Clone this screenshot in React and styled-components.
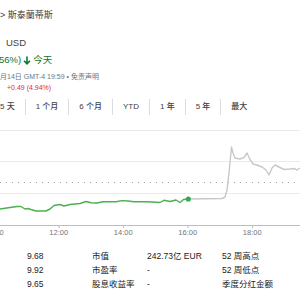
import React from "react"
import styled, { createGlobalStyle } from "styled-components"

const Global = createGlobalStyle`
    html, body {
        margin: 0;
        padding: 0;
        background: #fff;
    }
    body {
        width: 300px;
        height: 300px;
        overflow: hidden;
        font-family: "Liberation Sans", "Noto Sans CJK SC", sans-serif;
        color: #202124;
    }
`

export const Page = styled.div`
    width: 300px;
    height: 300px;
    overflow: hidden;
    position: relative;
`

export const Crumb = styled.div`
    height: 30px;
    line-height: 30px;
    font-size: 9px;
    color: #3c4043;
    white-space: nowrap;
`

export const PriceRow = styled.div`
    margin-top: 4px;
    height: 18px;
    line-height: 18px;
    padding-left: 6px;
    font-size: 9.5px;
    color: #3c4043;
`

export const ChangeRow = styled.div`
    height: 16px;
    line-height: 16px;
    font-size: 9.5px;
    color: #137333;
    display: flex;
    align-items: center;
    gap: 2px;
    white-space: nowrap;
    margin-left: -1px;
`

export const Meta = styled.div`
    margin-top: 3px;
    height: 12px;
    line-height: 12px;
    font-size: 7px;
    color: #70757a;
    white-space: nowrap;
`

export const AfterHours = styled.div`
    height: 10px;
    line-height: 10px;
    font-size: 7px;
    color: #d93025;
    padding-left: 7px;
    white-space: nowrap;
`

export const Tabs = styled.div`
    margin-top: 6px;
    height: 16px;
    display: flex;
    margin-left: -10px;
`

export const Tab = styled.div`
    padding: 0 10px;
    font-size: 8px;
    font-weight: 500;
    color: #3c4043;
    line-height: 16px;
    white-space: nowrap;
    border-left: ${p => (p.$first ? "none" : "1px solid #dadce0")};
`

export const TimeAxis = styled.div`
    display: flex;
    height: 10px;
    margin-left: -38px;
`

export const TimeLabel = styled.div`
    flex: 0 0 64.5px;
    text-align: center;
    font-size: 7.5px;
    line-height: 10px;
    color: #70757a;
`

export const Stats = styled.div`
    margin-top: 11px;
    margin-left: -38px;
    display: grid;
    grid-template-columns: 65px 65px 55px 75px 80px 60px;
    grid-auto-rows: 14px;
    font-size: 8.5px;
    line-height: 14px;
    white-space: nowrap;
`

export const StatLabel = styled.div`
    color: #202124;
`

export const StatValue = styled.div`
    color: #202124;
`

const greenPts = [
    [0, 209], [10, 207.5], [17, 206.5], [21, 206.5], [25, 209], [28, 208.5], [31, 209.5], [36, 211],
    [46, 211], [50, 209], [54, 205.5], [60, 204.5], [64, 206], [70, 204.5], [80, 203.5],
    [86, 201.5], [91, 202.8], [97, 203], [103, 201.7], [116, 201.7], [122, 200.6], [128, 201],
    [134, 201.7], [147, 201.7], [152, 202], [160, 202.5], [164, 200.3], [170, 201.5],
    [176, 200], [180, 202.5], [183.5, 199.5], [188, 199]
]

const greyPts = [
    [188, 199], [222, 198.5], [225, 197], [227, 190], [229, 173], [231.5, 147], [233, 153],
    [235, 158], [240, 159], [244, 157.5], [247, 153], [250, 159.5], [253, 164], [257, 165],
    [262, 167], [266, 170], [269, 175], [272, 168], [275, 165], [279, 167], [284, 169.5],
    [290, 169], [294, 168.5], [297, 170], [300, 168]
]

const TOP = 115
const toPath = pts => pts.map(([x, y], i) => `${i ? "L" : "M"}${x} ${y - TOP}`).join(" ")

function Chart() {
    const ticks = [59, 123.5, 188, 252.5]
    return (
        <svg width="300" height="113" style={{ display: "block" }}>
            {[15, 46, 78].map(y => (
                <line key={y} x1="0" x2="300" y1={y + 0.5} y2={y + 0.5} stroke="#ebebeb" strokeWidth="1" />
            ))}
            <line x1="0" x2="300" y1="67.5" y2="67.5" stroke="#9aa0a6" strokeWidth="1" strokeDasharray="1 5" />
            <line x1="0" x2="300" y1="110.5" y2="110.5" stroke="#bdbdbd" strokeWidth="1" />
            {ticks.map(x => (
                <line key={x} x1={x} x2={x} y1="110" y2="114" stroke="#bdbdbd" strokeWidth="1" />
            ))}
            <path d={toPath(greyPts)} fill="none" stroke="#c8c8c8" strokeWidth="1.4" strokeLinejoin="round" />
            <path d={toPath(greenPts)} fill="none" stroke="#4caf50" strokeWidth="1.4" strokeLinejoin="round" />
            <circle cx="188.3" cy={199 - TOP} r="2.6" fill="#34a853" />
        </svg>
    )
}

function DownArrow() {
    return (
        <svg width="8" height="9" viewBox="0 0 8 9">
            <path d="M4 0.5 V7.5 M1 4.8 L4 7.8 L7 4.8" stroke="#137333" strokeWidth="1.6" fill="none" />
        </svg>
    )
}

const tabs = ["5 天", "1 个月", "6 个月", "YTD", "1 年", "5 年", "最大"]

const stats = [
    ["开盘价", "9.68", "市值", "242.73亿 EUR", "52 周高点", "22.07"],
    ["最高价", "9.92", "市盈率", "-", "52 周低点", "9.65"],
    ["最低价", "9.65", "股息收益率", "-", "季度分红金额", "-"]
]

function App() {
    return (
        <Page>
            <Global />
            <Crumb>&gt; 斯泰蘭蒂斯</Crumb>
            <PriceRow>USD</PriceRow>
            <ChangeRow>
                <span>56%)</span>
                <DownArrow />
                <span>今天</span>
            </ChangeRow>
            <Meta>月14日 GMT-4 19:59 • 免责声明</Meta>
            <AfterHours>+0.49 (4.94%)</AfterHours>
            <Tabs>
                {tabs.map((t, i) => (
                    <Tab key={t} $first={i === 0}>{t}</Tab>
                ))}
            </Tabs>
            <Chart />
            <TimeAxis>
                {["10:00", "12:00", "14:00", "16:00", "18:00"].map(t => (
                    <TimeLabel key={t}>{t}</TimeLabel>
                ))}
            </TimeAxis>
            <Stats>
                {stats.map(row =>
                    row.map((cell, i) =>
                        i % 2 === 0
                            ? <StatLabel key={cell + i}>{cell}</StatLabel>
                            : <StatValue key={cell + i}>{cell}</StatValue>
                    )
                )}
            </Stats>
        </Page>
    )
}

export default App
